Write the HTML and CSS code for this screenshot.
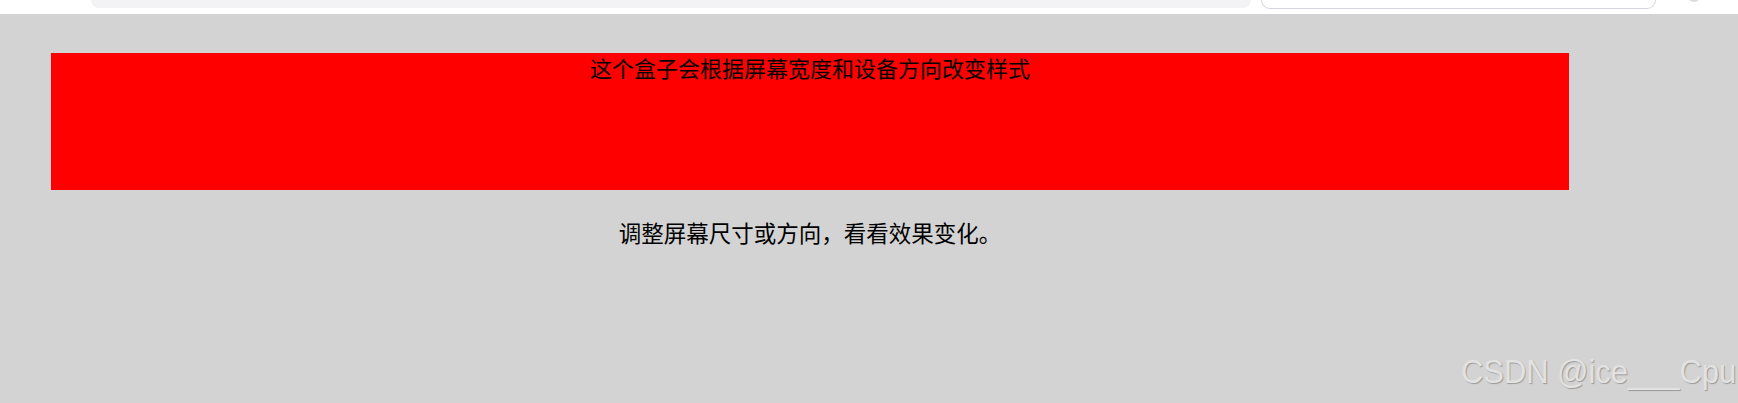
FILE: index.html
```html
<!DOCTYPE html>
<html lang="zh-CN">
<head>
<meta charset="utf-8">
<title>媒体查询</title>
<link rel="stylesheet" href="styles.css">
</head>
<body>
<div class="chrome">
  <div class="address"></div>
  <div class="search"></div>
  <div class="dot"></div>
</div>
<main class="page">
  <div class="box">这个盒子会根据屏幕宽度和设备方向改变样式</div>
  <p class="hint">调整屏幕尺寸或方向，看看效果变化。</p>
</main>
<div class="watermark">CSDN @ice___Cpu</div>
</body>
</html>
```

FILE: styles.css
```css
html, body {
  margin: 0;
  padding: 0;
}
body {
  background: #d3d3d3;
  width: 1738px;
  height: 403px;
  overflow: hidden;
  position: relative;
  font-family: "Noto Sans CJK SC", "Noto Sans", sans-serif;
  color: #000;
}
.chrome {
  height: 14px;
  background: #fff;
  display: flex;
  align-items: flex-start;
  padding-left: 91px;
  overflow: hidden;
}
.address {
  width: 1160px;
  height: 8px;
  background: #f3f3f5;
  border-radius: 0 0 9px 9px;
}
.search {
  margin-left: 10px;
  width: 393px;
  height: 8px;
  background: #fff;
  border: 1px solid #d4d4de;
  border-top: none;
  border-radius: 0 0 9px 9px;
}
.dot {
  margin-left: 31px;
  margin-top: -12px;
  width: 14px;
  height: 14px;
  border-radius: 50%;
  background: #dcdcdc;
}
.page {
  padding-left: 51px;
  padding-top: 39px;
}
.box {
  width: 1518px;
  height: 137px;
  background: #ff0000;
  text-align: center;
  font-size: 22px;
  line-height: 29px;
}
.hint {
  margin: 27px 0 0 0;
  width: 1518px;
  text-align: center;
  font-size: 22.5px;
  line-height: 30px;
}
.watermark {
  position: absolute;
  left: 1461px;
  top: 355px;
  font-family: "Liberation Sans", Arial, sans-serif;
  font-size: 33px;
  line-height: 33px;
  white-space: nowrap;
  color: #e2e2e2;
  text-shadow: 1px 1px 1px #9a9a9a;
  transform: scaleX(0.936);
  transform-origin: left top;
}
```
